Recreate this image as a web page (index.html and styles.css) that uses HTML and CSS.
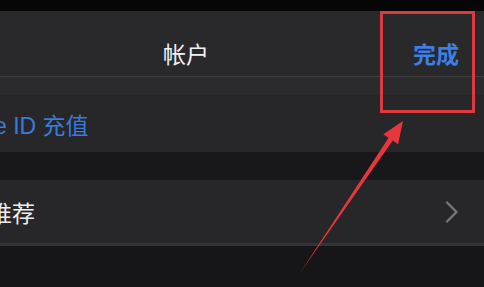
FILE: index.html
```html
<!DOCTYPE html>
<html lang="zh-CN">

<head>
    <meta charset="UTF-8">
    <meta name="viewport" content="width=device-width, initial-scale=1.0">
    <title>帐户</title>
    <link rel="stylesheet" href="styles.css">
</head>

<body>
    <div class="status-bar"></div>
    <header class="nav-bar">
        <span class="nav-title">帐户</span>
        <a class="nav-done" href="#">完成</a>
    </header>
    <div class="nav-fade"></div>

    <div class="cell cell-link">
        <span class="cell-label label-topup">Apple ID 充值</span>
    </div>

    <div class="group-gap"></div>

    <div class="cell cell-nav">
        <span class="cell-label label-rec">个性化推荐</span>
        <svg class="chevron" width="14" height="22" viewBox="0 0 14 22">
            <path d="M2 1.5 L11.5 11 L2 20.5" fill="none" stroke="#76767b" stroke-width="2.4" stroke-linecap="round" stroke-linejoin="round"/>
        </svg>
    </div>

    <!-- annotation: box around the done button + arrow -->
    <div class="mark-box"></div>
    <svg class="mark-arrow" width="484" height="287" viewBox="0 0 484 287">
        <polygon points="300,273 388.6,137.8 383.3,134.2 403,121 398.1,144.2 392.8,140.6" fill="#e8373c"/>
    </svg>
</body>

</html>
```

FILE: styles.css
```css
body {
    font-family: "Liberation Sans", "Noto Sans CJK SC", sans-serif;
    margin: 0;
    padding: 0;
    width: 484px;
    height: 287px;
    overflow: hidden;
    position: relative;
    background-color: #161618;
}

.status-bar {
    height: 11px;
    background-color: #060606;
}

.nav-bar {
    height: 47px;
    padding-top: 18px;
    display: flex;
    align-items: center;
    background-color: #29292c;
    border-bottom: 1px solid #3e3e41;
}

.nav-title {
    margin-left: 163px;
    font-size: 23px;
    color: #f2f2f4;
}

.nav-done {
    margin-left: auto;
    margin-right: 25px;
    font-size: 23px;
    font-weight: bold;
    color: #3d7fe3;
    text-decoration: none;
}

.nav-fade {
    height: 18px;
    background-color: #2b2b2e;
}

.cell {
    display: flex;
    align-items: center;
    background-color: #27272a;
    overflow: hidden;
    white-space: nowrap;
}

.cell-link {
    height: 57px;
}

.cell-nav {
    height: 63px;
    border-bottom: 3px solid #333336;
}

.cell-label {
    font-size: 23px;
    flex-shrink: 0;
}

.label-topup {
    margin-left: -52px;
    color: #3a7bd9;
}

.label-rec {
    margin-left: -80px;
    color: #eeeef0;
}

.chevron {
    margin-left: auto;
    margin-right: 25px;
}

.group-gap {
    height: 28px;
    background-color: #18181a;
}

.mark-box {
    position: absolute;
    left: 380px;
    top: 11px;
    width: 89px;
    height: 96px;
    border: 3px solid #dc3a3e;
}

.mark-arrow {
    position: absolute;
    left: 0;
    top: 0;
}
```
